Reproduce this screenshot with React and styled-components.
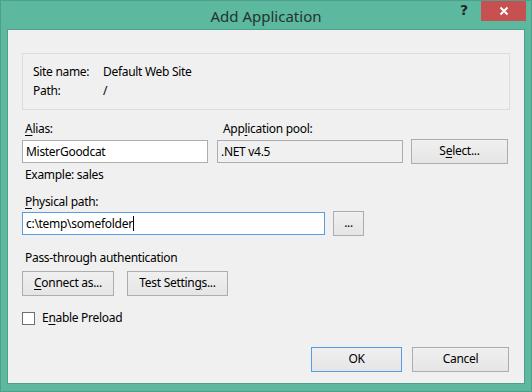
import React from "react";
import styled, { createGlobalStyle } from "styled-components";

const Global = createGlobalStyle`
  html, body { margin: 0; padding: 0; background: #5cb9a0; }
  body { font-family: "Noto Sans", "Open Sans", sans-serif; }
`;

const Window = styled.div`
  width: 532px;
  height: 392px;
  box-sizing: border-box;
  background: #5cb9a0;
  border: 1px solid #4f9f8b;
  display: flex;
  flex-direction: column;
  padding: 0 6px 7px 6px;
`;

const TitleBar = styled.div`
  height: 28px;
  position: relative;
  display: flex;
  align-items: center;
  justify-content: center;
  flex-shrink: 0;
`;

const Title = styled.div`
  font-family: "Noto Sans", sans-serif;
  font-size: 15px;
  color: #26332f;
  margin-top: 2px;
`;

const Help = styled.div`
  position: absolute;
  right: 57px;
  top: 1px;
  font-family: "DejaVu Sans", sans-serif;
  font-weight: bold;
  font-size: 14px;
  color: #1e2a27;
`;

const Close = styled.div`
  position: absolute;
  right: -1px;
  top: 0;
  width: 45px;
  height: 20px;
  background: #c75050;
  display: flex;
  align-items: center;
  justify-content: center;
`;

const Panel = styled.div`
  flex: 1;
  background: #f0f0f0;
  border: 1px solid #4f9f8b;
  display: flex;
  flex-direction: column;
  padding: 0 15px 0 14px;
  font-size: 12px;
  letter-spacing: -0.3px;
  color: #000;
`;

const InfoBox = styled.div`
  margin-top: 23px;
  height: 57px;
  box-sizing: border-box;
  border: 1px solid #dcdcdc;
  padding: 8px 10px 0 10px;
  display: grid;
  grid-template-columns: 70px 1fr;
  grid-auto-rows: 19px;
  align-items: center;
  margin-right: -1px;
`;

const Text = styled.span`
  line-height: 16px;
  white-space: nowrap;
`;

const Row = styled.div`
  display: flex;
  align-items: center;
  margin-top: ${(p) => p.$mt || 0}px;
  gap: ${(p) => p.$gap || 0}px;
  justify-content: ${(p) => p.$justify || "flex-start"};
`;

const Label = styled.div`
  line-height: 16px;
  height: 16px;
  padding-left: 3px;
  width: ${(p) => (p.$w ? p.$w + "px" : "auto")};
  white-space: nowrap;
  flex-shrink: 0;
`;

const U = styled.span`
  text-decoration: underline;
  text-underline-offset: 2px;
`;

const Input = styled.div`
  box-sizing: border-box;
  height: 23px;
  width: ${(p) => p.$w}px;
  background: ${(p) => (p.$disabled ? "#f0f0f0" : "#fff")};
  border: 1px solid ${(p) => (p.$focus ? "#569de5" : "#adadad")};
  padding: 0 3px;
  display: flex;
  align-items: center;
  line-height: 16px;
  white-space: nowrap;
  flex-shrink: 0;
`;

const Caret = styled.span`
  display: inline-block;
  width: 1px;
  height: 15px;
  background: #000;
`;

const Button = styled.div`
  box-sizing: border-box;
  height: 25px;
  width: ${(p) => p.$w}px;
  border: 1px solid ${(p) => (p.$default ? "#569de5" : "#adadad")};
  background: linear-gradient(#f0f0f0, #e5e5e5);
  display: flex;
  align-items: center;
  justify-content: center;
  line-height: 16px;
  white-space: nowrap;
  flex-shrink: 0;
  padding-bottom: 1px;
`;

const Check = styled.div`
  box-sizing: border-box;
  width: 13px;
  height: 13px;
  background: #fff;
  border: 1px solid #707070;
  flex-shrink: 0;
`;

export default function App() {
  return (
    <>
      <Global />
      <Window>
        <TitleBar>
          <Title>Add Application</Title>
          <Help>?</Help>
          <Close>
            <svg width="10" height="10" viewBox="0 0 10 10">
              <path d="M1.5 1.5 L8.5 8.5 M8.5 1.5 L1.5 8.5" stroke="#fff" strokeWidth="2" />
            </svg>
          </Close>
        </TitleBar>
        <Panel>
          <InfoBox>
            <Text>Site name:</Text>
            <Text>Default Web Site</Text>
            <Text>Path:</Text>
            <Text>/</Text>
          </InfoBox>

          <Row $mt={11}>
            <Label $w={195}>
              <U>A</U>lias:
            </Label>
            <Label>
              App<U>l</U>ication pool:
            </Label>
          </Row>
          <Row $mt={2}>
            <Input $w={186}>MisterGoodcat</Input>
            <Input $w={186} $disabled style={{ marginLeft: 9 }}>
              .NET v4.5
            </Input>
            <Button $w={97} style={{ marginLeft: 8 }}>
              <span>
                S<U>e</U>lect...
              </span>
            </Button>
          </Row>

          <Row $mt={3}>
            <Label>Example: sales</Label>
          </Row>

          <Row $mt={11}>
            <Label>
              <U>P</U>hysical path:
            </Label>
          </Row>
          <Row $mt={1} $gap={8}>
            <Input $w={303} $focus>
              c:\temp\somefolder
              <Caret />
            </Input>
            <Button $w={31}>...</Button>
          </Row>

          <Row $mt={14}>
            <Label>Pass-through authentication</Label>
          </Row>
          <Row $mt={5} $gap={13}>
            <Button $w={92}>
              <span>
                <U>C</U>onnect as...
              </span>
            </Button>
            <Button $w={101}>
              <span>
                Test Settin<U>g</U>s...
              </span>
            </Button>
          </Row>

          <Row $mt={14} $gap={7}>
            <Check />
            <Text>
              E<U>n</U>able Preload
            </Text>
          </Row>

          <Row $mt={21} $gap={10} $justify="flex-end">
            <Button $w={91} $default>
              OK
            </Button>
            <Button $w={97}>Cancel</Button>
          </Row>
        </Panel>
      </Window>
    </>
  );
}
